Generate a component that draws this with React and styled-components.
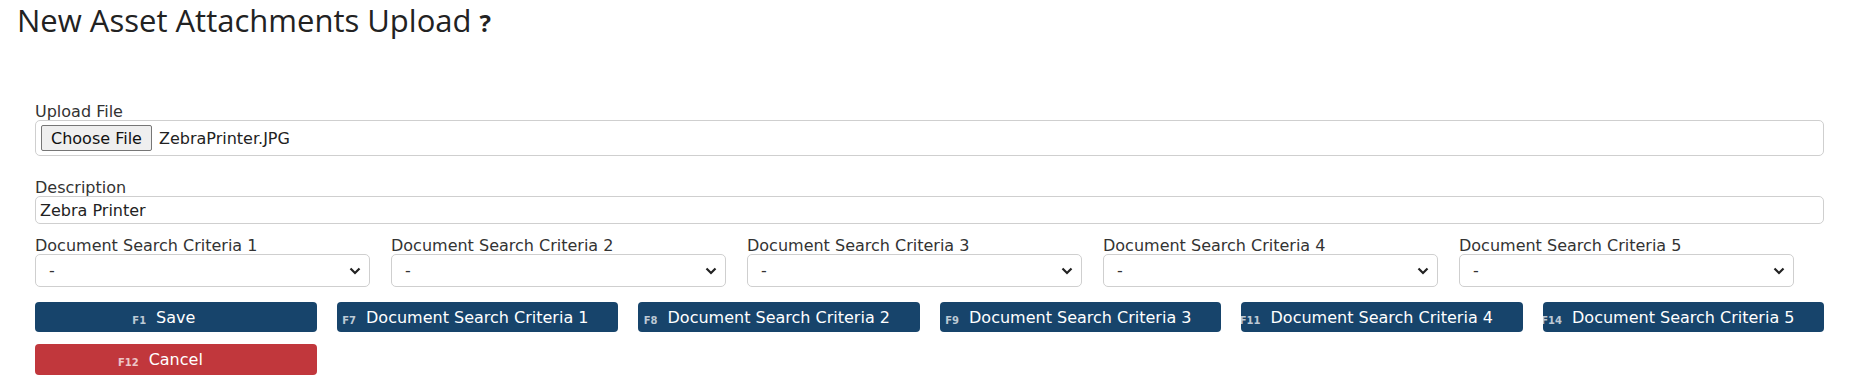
import styled, { createGlobalStyle } from 'styled-components'

const GlobalStyle = createGlobalStyle`
  body {
    margin: 0;
    background: #fff;
    font-family: 'DejaVu Sans', Verdana, sans-serif;
    color: #333;
  }
`

const Page = styled.div`
  padding: 0 33px 0 17px;
`

const Title = styled.h1`
  margin: 0;
  padding-top: 2px;
  font-family: 'Open Sans', 'Segoe UI', sans-serif;
  font-weight: 400;
  font-size: 31px;
  line-height: 36px;
  color: #222;
  display: flex;
  align-items: baseline;
`

const Help = styled.span`
  font-size: 24px;
  font-weight: 700;
  margin-left: 8px;
  color: #222;
`

const Form = styled.form`
  margin-top: 63px;
  padding-left: 18px;
  display: flex;
  flex-direction: column;
`

const Field = styled.div`
  display: flex;
  flex-direction: column;
  margin-top: ${({ $gap }) => $gap || 0}px;
`

const Label = styled.label`
  font-size: 16px;
  line-height: 16px;
  color: #333;
  white-space: nowrap;
`

const FileBox = styled.div`
  height: 36px;
  box-sizing: border-box;
  border: 1px solid #cfcfcf;
  border-radius: 5px;
  display: flex;
  align-items: center;
  padding-left: 5px;
  font-size: 16px;
  color: #222;
`

const ChooseButton = styled.span`
  height: 26px;
  box-sizing: border-box;
  padding: 0 9px;
  display: inline-flex;
  align-items: center;
  background: #efefef;
  border: 1px solid #767676;
  border-radius: 2px;
  color: #111;
  margin-right: 7px;
`

const TextInput = styled.input`
  height: 28px;
  box-sizing: border-box;
  border: 1px solid #cfcfcf;
  border-radius: 5px;
  padding: 0 4px;
  font-family: inherit;
  font-size: 16px;
  color: #222;
  outline: none;
`

const CriteriaRow = styled.div`
  display: grid;
  grid-template-columns: repeat(5, 1fr);
  column-gap: 21px;
  padding-right: 30px;
  margin-top: 14px;
`

const Select = styled.select`
  appearance: none;
  height: 33px;
  box-sizing: border-box;
  border: 1px solid #cfcfcf;
  border-radius: 5px;
  padding: 0 30px 0 13px;
  font-family: inherit;
  font-size: 16px;
  color: #333;
  background: #fff
    url("data:image/svg+xml,%3Csvg xmlns='http://www.w3.org/2000/svg' width='12' height='8' viewBox='0 0 12 8'%3E%3Cpath d='M1.5 1.5l4.5 4.5 4.5-4.5' fill='none' stroke='%23222' stroke-width='2.2'/%3E%3C/svg%3E")
    no-repeat right 8px center;
  outline: none;
`

const ButtonGrid = styled.div`
  display: grid;
  grid-template-columns: repeat(6, 1fr);
  column-gap: 20px;
  row-gap: 12px;
  margin-top: 15px;
`

const Button = styled.button`
  height: ${({ $tall }) => ($tall ? 31 : 30)}px;
  border: none;
  border-radius: 4px;
  background: ${({ $danger }) => ($danger ? '#c1373c' : '#17446b')};
  color: #fff;
  font-family: inherit;
  font-size: 16px;
  overflow: hidden;
  display: flex;
  align-items: center;
  justify-content: center;
  padding: 0;
  cursor: pointer;
`

const ButtonText = styled.span`
  position: relative;
  white-space: nowrap;
`

const Key = styled.span`
  position: absolute;
  right: 100%;
  bottom: 1px;
  margin-right: 10px;
  font-size: 10px;
  font-weight: 700;
  color: rgba(255, 255, 255, 0.72);
`

const criteria = [1, 2, 3, 4, 5]
const keys = ['F7', 'F8', 'F9', 'F11', 'F14']

export default function App() {
  return (
    <Page>
      <GlobalStyle />
      <Title>
        New Asset Attachments Upload <Help>?</Help>
      </Title>
      <Form onSubmit={(e) => e.preventDefault()}>
        <Field>
          <Label>Upload File</Label>
          <FileBox>
            <ChooseButton>Choose File</ChooseButton>
            ZebraPrinter.JPG
          </FileBox>
        </Field>
        <Field $gap={24}>
          <Label>Description</Label>
          <TextInput defaultValue="Zebra Printer" />
        </Field>
        <CriteriaRow>
          {criteria.map((n) => (
            <Field key={n}>
              <Label>Document Search Criteria {n}</Label>
              <Select defaultValue="-">
                <option value="-">-</option>
              </Select>
            </Field>
          ))}
        </CriteriaRow>
        <ButtonGrid>
          <Button type="submit">
            <ButtonText>
              <Key>F1</Key>Save
            </ButtonText>
          </Button>
          {criteria.map((n, i) => (
            <Button type="button" key={n}>
              <ButtonText>
                <Key>{keys[i]}</Key>Document Search Criteria {n}
              </ButtonText>
            </Button>
          ))}
          <Button type="button" $danger $tall>
            <ButtonText>
              <Key>F12</Key>Cancel
            </ButtonText>
          </Button>
        </ButtonGrid>
      </Form>
    </Page>
  )
}
